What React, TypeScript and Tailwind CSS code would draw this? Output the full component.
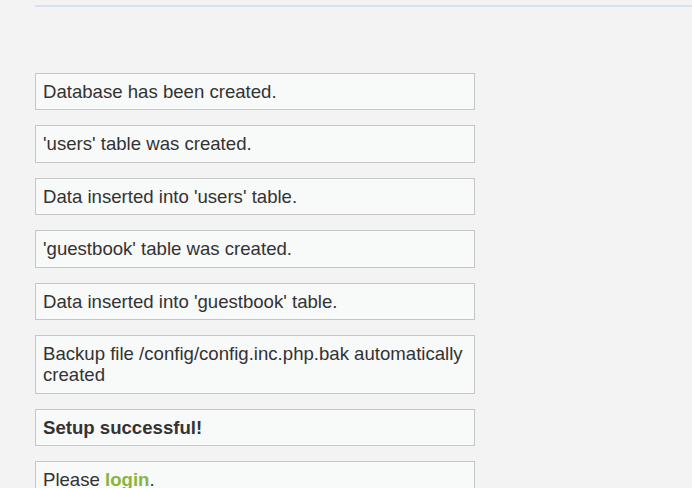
import React from "react";

const msgs: React.ReactNode[] = [
  "Database has been created.",
  "'users' table was created.",
  "Data inserted into 'users' table.",
  "'guestbook' table was created.",
  "Data inserted into 'guestbook' table.",
  "Backup file /config/config.inc.php.bak automatically created",
  <b key="s">Setup successful!</b>,
  <span key="l">
    Please <a className="text-[#8ab43f] font-bold">login</a>.
  </span>,
];

export default function App() {
  return (
    <div
      className="w-[692px] h-[488px] overflow-hidden bg-[#f3f3f3] text-[#333] pl-[35px]"
      style={{ fontFamily: '"Liberation Sans", Arial, sans-serif' }}
    >
      <div className="mt-[5px] h-[2px] bg-[#d9e1ef]" />
      <div className="mt-[66px] flex flex-col gap-[15px]">
        {msgs.map((m, i) => (
          <div
            key={i}
            className="w-[440px] border border-[#c6c6c6] bg-[#f8f9f9] px-[7px] py-[7px] text-[18.6px] leading-[21.4px]"
          >
            {m}
          </div>
        ))}
      </div>
    </div>
  );
}
